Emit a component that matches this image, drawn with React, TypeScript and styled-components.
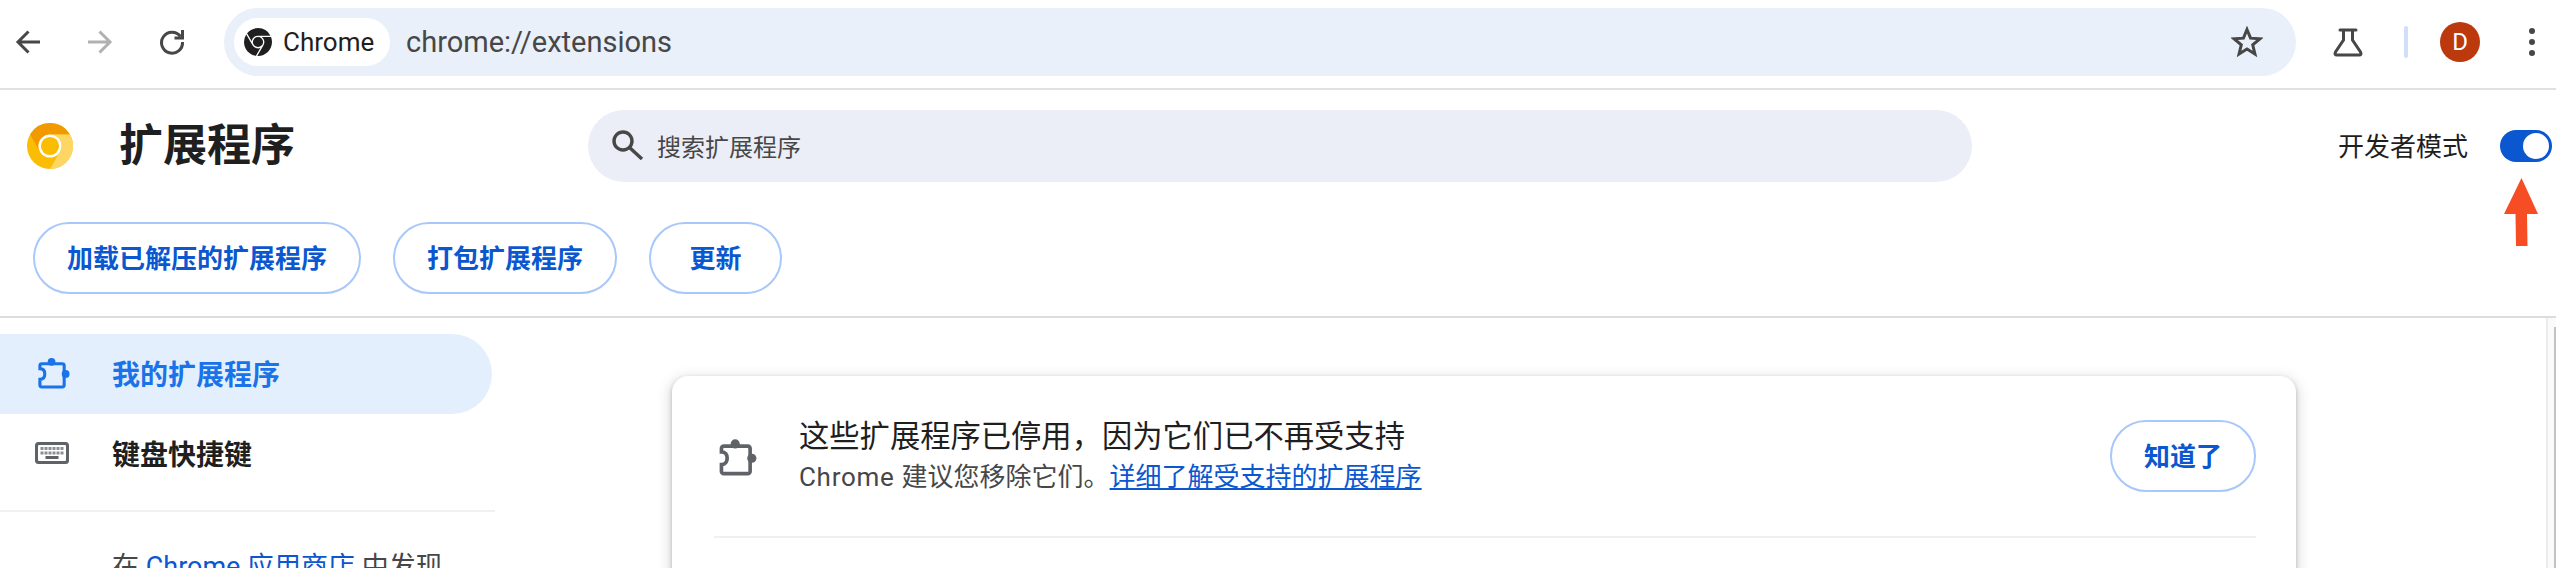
import styled, { createGlobalStyle } from "styled-components";
import { SiGooglechrome } from "react-icons/si";

const GlobalStyle = createGlobalStyle`
  html, body {
    margin: 0;
    padding: 0;
    background: #fff;
    font-family: Roboto, "Noto Sans CJK SC", sans-serif;
    color: #1f1f1f;
  }
  * { box-sizing: border-box; }
`;

const Page = styled.div`
  position: relative;
  width: 2556px;
  height: 568px;
  overflow: hidden;
  display: flex;
  flex-direction: column;
`;

/* browser toolbar */
const Toolbar = styled.div`
  height: 90px;
  flex: none;
  display: flex;
  align-items: center;
  padding: 0 0 4px 16px;
  border-bottom: 2px solid #e1e1e1;
`;

const NavButton = styled.div<{ $gap?: number; $color?: string; $size?: number }>`
  width: ${(p) => p.$size ?? 24}px;
  height: ${(p) => p.$size ?? 24}px;
  flex: none;
  margin-left: ${(p) => p.$gap ?? 0}px;
  color: ${(p) => p.$color ?? "#474747"};
  display: flex;
  align-items: center;
  justify-content: center;
  svg { flex: none; overflow: visible; }
`;

const Omnibox = styled.div`
  width: 2072px;
  height: 68px;
  margin-left: 40px;
  flex: none;
  border-radius: 34px;
  background: #e9f0f9;
  display: flex;
  align-items: center;
  padding: 0 33px 0 10px;
`;

const SiteChip = styled.div`
  width: 156px;
  height: 48px;
  flex: none;
  border-radius: 24px;
  background: #fff;
  display: flex;
  align-items: center;
  gap: 11px;
  padding-left: 10px;
  font-size: 26px;
  color: #1f1f1f;
  svg { color: #1f1f1f; }
`;

const Url = styled.div`
  margin-left: 16px;
  flex: 1;
  font-size: 29px;
  color: #474747;
`;

const LabDivider = styled.div`
  width: 4px;
  height: 32px;
  flex: none;
  margin-left: 40px;
  border-radius: 2px;
  background: #cfe0f8;
`;

const Avatar = styled.div`
  width: 40px;
  height: 40px;
  flex: none;
  margin-left: 32px;
  border-radius: 50%;
  background: #bc380d;
  color: #fff;
  font-size: 24px;
  display: flex;
  align-items: center;
  justify-content: center;
`;

const MenuDots = styled.div`
  width: 6px;
  flex: none;
  margin-left: 49px;
  display: flex;
  flex-direction: column;
  gap: 5px;
  i {
    display: block;
    width: 6px;
    height: 6px;
    border-radius: 50%;
    background: #474747;
  }
`;

/* extensions page header */
const Header = styled.header`
  flex: none;
  border-bottom: 2px solid #dadce0;
`;

const HeaderTop = styled.div`
  height: 112px;
  display: flex;
  align-items: center;
  padding: 0 4px 0 27px;
`;

const TitleBlock = styled.div`
  width: 561px;
  flex: none;
  display: flex;
  align-items: center;
  gap: 46px;
`;

const Title = styled.h1`
  margin: 0;
  font-size: 44px;
  line-height: 56px;
  font-weight: 700;
  color: #1f1f1f;
`;

const SearchBox = styled.div`
  width: 1384px;
  height: 72px;
  flex: none;
  border-radius: 36px;
  background: #ebeef7;
  display: flex;
  align-items: center;
  gap: 13px;
  padding: 0 0 2px 24px;
  font-size: 24px;
  color: #474747;
`;

const DevMode = styled.div`
  margin-left: auto;
  display: flex;
  align-items: center;
  gap: 32px;
  font-size: 26px;
  color: #1f1f1f;
`;

const DevLabel = styled.span`
  margin-bottom: 3px;
`;

const Toggle = styled.div`
  width: 52px;
  height: 32px;
  border-radius: 16px;
  background: #0b57d0;
  padding: 3px 3px 3px 23px;
  i {
    display: block;
    width: 26px;
    height: 26px;
    border-radius: 50%;
    background: #fff;
  }
`;

const ActionRow = styled.div`
  display: flex;
  gap: 32px;
  padding: 20px 0 22px 33px;
`;

const PillButton = styled.button`
  height: 72px;
  min-width: 133px;
  padding: 0 32px 3px;
  flex: none;
  border: 2px solid #a8c7fa;
  border-radius: 36px;
  background: #fff;
  color: #0b57d0;
  font-family: inherit;
  font-size: 26px;
  font-weight: 700;
`;

/* body */
const Body = styled.div`
  flex: 1;
  min-height: 0;
  display: flex;
`;

const Sidebar = styled.nav`
  width: 496px;
  flex: none;
  padding-top: 16px;
`;

const NavItem = styled.div<{ $active?: boolean }>`
  width: 492px;
  height: 80px;
  display: flex;
  align-items: center;
  gap: ${(p) => (p.$active ? 42 : 43)}px;
  padding: 0 0 3px ${(p) => (p.$active ? 37 : 35)}px;
  border-radius: 0 40px 40px 0;
  background: ${(p) => (p.$active ? "#e4effd" : "transparent")};
  color: ${(p) => (p.$active ? "#1a73e8" : "#1f1f1f")};
  font-size: 28px;
  font-weight: 700;
  svg { flex: none; }
`;

const NavDivider = styled.div`
  width: 495px;
  height: 2px;
  margin-top: 16px;
  background: #f1f1f1;
`;

const StoreHint = styled.div`
  margin-top: 37px;
  padding-left: 112px;
  font-size: 27px;
  line-height: 36px;
  white-space: nowrap;
  color: #474747;
  a { color: #0b57d0; text-decoration: none; }
`;

const Content = styled.main`
  flex: 1;
  min-width: 0;
  padding: 58px 0 0 176px;
`;

const Card = styled.section`
  width: 1624px;
  height: 400px;
  background: #fff;
  border-radius: 16px;
  box-shadow: 0 2px 4px rgba(60, 64, 67, 0.3), 0 4px 12px 4px rgba(60, 64, 67, 0.15);
  padding: 0 40px 0 42px;
`;

const NoticeRow = styled.div`
  display: flex;
  align-items: center;
  height: 162px;
  padding: 44px 0;
  border-bottom: 2px solid #f0f0f0;
  color: #5f6368;
  svg { flex: none; margin-left: 4px; }
`;

const NoticeText = styled.div`
  margin-left: 42px;
  flex: 1;
`;

const NoticeTitle = styled.div`
  font-size: 30.3px;
  line-height: 42px;
  color: #1f1f1f;
`;

const NoticeSub = styled.div`
  font-size: 26px;
  line-height: 38px;
  color: #474747;
  span { letter-spacing: 0.7px; }
  a { color: #0b57d0; text-decoration: underline; }
`;

const ScrollTrack = styled.div`
  width: 10px;
  flex: none;
  background: #fafafa;
  border-left: 2px solid #ececec;
  padding: 9px 0 0 6px;
  i {
    display: block;
    height: 100%;
    background: #c2c2c2;
  }
`;

const Annotation = styled.svg`
  position: absolute;
  left: 2504px;
  top: 178px;
`;

function Puzzle({ size }: { size: number }) {
  return (
    <svg width={size} height={size} viewBox="0 0 34 34">
      <path
        d="M5 8H26a2 2 0 0 1 2 2V30a2 2 0 0 1-2 2H5a2 2 0 0 1-2-2V24c3.5 0 5-2.5 5-5.5S6.5 13 3 13V10a2 2 0 0 1 2-2z"
        fill="none"
        stroke="currentColor"
        strokeWidth="3.2"
      />
      <circle cx="15" cy="6" r="4" fill="currentColor" />
      <circle cx="29.5" cy="18.5" r="4" fill="currentColor" />
    </svg>
  );
}

function KeyboardIcon() {
  const keys = [0, 1, 2, 3, 4, 5];
  return (
    <svg width="34" height="22" viewBox="0 0 34 22">
      <rect width="34" height="22" rx="3.5" fill="#5f6368" />
      <rect x="3" y="3" width="28" height="16" rx="1" fill="#fff" />
      {keys.map((k) => (
        <rect key={k} x={5.5 + k * 4} y="5" width="3" height="3" fill="#8b8e92" />
      ))}
      {keys.map((k) => (
        <rect key={k} x={5.5 + k * 4} y="9.5" width="3" height="3" fill="#8b8e92" />
      ))}
      <rect x="10.5" y="14" width="13" height="3" fill="#5f6368" />
    </svg>
  );
}

function CanaryLogo() {
  return (
    <svg width="46" height="46" viewBox="0 0 48 48">
      <circle cx="24" cy="24" r="24" fill="#fbbc04" />
      <path d="M24 0a24 24 0 0 1 20.8 12H24a12 12 0 0 0-10.4 18L3.2 12A24 24 0 0 1 24 0z" fill="#f29900" />
      <path d="M44.8 12A24 24 0 0 1 24 48l10.4-18A12 12 0 0 0 24 12z" fill="#fdd663" />
      <circle cx="24" cy="24" r="12" fill="#fff" />
      <circle cx="24" cy="24" r="9.5" fill="#fbbc04" />
    </svg>
  );
}

export default function App() {
  return (
    <Page>
      <GlobalStyle />
      <Toolbar>
        <NavButton>
          <svg width="24" height="24" viewBox="0 0 24 24" fill="none" stroke="currentColor" strokeWidth="3">
            <path d="M24 12H2M12.5 1.5L2 12l10.5 10.5" />
          </svg>
        </NavButton>
        <NavButton $gap={48} $color="#b1b1b1">
          <svg width="24" height="24" viewBox="0 0 24 24" fill="none" stroke="currentColor" strokeWidth="3">
            <path d="M0 12h22M11.5 1.5L22 12 11.5 22.5" />
          </svg>
        </NavButton>
        <NavButton $gap={48}>
          <svg width="24" height="24" viewBox="0 0 24 24" fill="none" stroke="currentColor" strokeWidth="3">
            <path d="M20.5 6.5A10.5 10.5 0 1 0 22.5 12" />
            <path d="M22.5 0V8H14.5" />
          </svg>
        </NavButton>
        <Omnibox>
          <SiteChip>
            <SiGooglechrome size={28} />
            Chrome
          </SiteChip>
          <Url>chrome://extensions</Url>
          <svg width="32" height="32" viewBox="0 0 32 32" fill="none" stroke="#474747" strokeWidth="3">
            <polygon points="16,3.5 19.53,12.15 28.84,12.83 21.71,18.85 23.94,27.92 16,23 8.06,27.92 10.29,18.85 3.16,12.83 12.47,12.15" />
          </svg>
        </Omnibox>
        <NavButton $gap={36} $size={32}>
          <svg width="32" height="32" viewBox="0 0 32 32" fill="none" stroke="currentColor" strokeWidth="3" strokeLinecap="round">
            <path d="M8 4H24M11.5 4V14L3.5 26Q2 29 5 29H27Q30 29 28.5 26L20.5 14V4" />
          </svg>
        </NavButton>
        <LabDivider />
        <Avatar>D</Avatar>
        <MenuDots>
          <i />
          <i />
          <i />
        </MenuDots>
      </Toolbar>

      <Header>
        <HeaderTop>
          <TitleBlock>
            <CanaryLogo />
            <Title>扩展程序</Title>
          </TitleBlock>
          <SearchBox>
            <svg width="32" height="30" viewBox="0 0 32 30" fill="none" stroke="#474747" strokeWidth="3.4">
              <circle cx="11" cy="11" r="9" />
              <path d="M17.5 17.5L30 29" />
            </svg>
            搜索扩展程序
          </SearchBox>
          <DevMode>
            <DevLabel>开发者模式</DevLabel>
            <Toggle>
              <i />
            </Toggle>
          </DevMode>
        </HeaderTop>
        <ActionRow>
          <PillButton>加载已解压的扩展程序</PillButton>
          <PillButton>打包扩展程序</PillButton>
          <PillButton>更新</PillButton>
        </ActionRow>
      </Header>

      <Body>
        <Sidebar>
          <NavItem $active>
            <Puzzle size={33} />
            我的扩展程序
          </NavItem>
          <NavItem>
            <KeyboardIcon />
            键盘快捷键
          </NavItem>
          <NavDivider />
          <StoreHint>
            在 <a>Chrome 应用商店</a> 中发现
          </StoreHint>
        </Sidebar>
        <Content>
          <Card>
            <NoticeRow>
              <Puzzle size={39} />
              <NoticeText>
                <NoticeTitle>这些扩展程序已停用，因为它们已不再受支持</NoticeTitle>
                <NoticeSub>
                  <span>Chrome </span>建议您移除它们。<a>详细了解受支持的扩展程序</a>
                </NoticeSub>
              </NoticeText>
              <PillButton>知道了</PillButton>
            </NoticeRow>
          </Card>
        </Content>
        <ScrollTrack>
          <i />
        </ScrollTrack>
      </Body>

      <Annotation width="36" height="70" viewBox="0 0 36 70">
        <polygon points="17.5,0 34,36 23,36 23.5,68 12,68 11.5,36 0,36" fill="#f64d24" />
      </Annotation>
    </Page>
  );
}
